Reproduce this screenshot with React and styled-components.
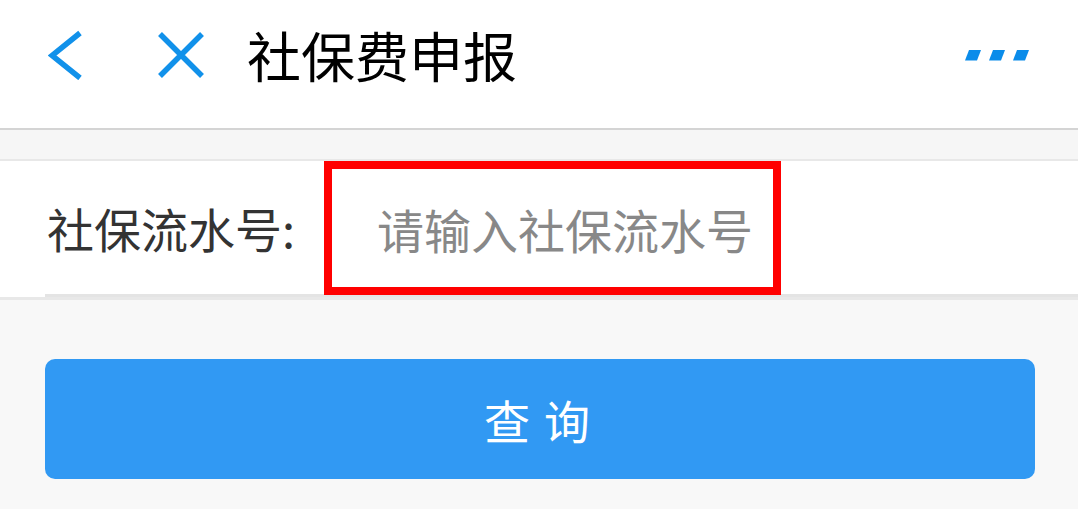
import React from 'react'
import styled, { createGlobalStyle } from 'styled-components'

const Global = createGlobalStyle`
  html, body {
    margin: 0;
    padding: 0;
    background: #f8f8f8;
    font-family: "Noto Sans CJK SC", "Noto Sans", sans-serif;
  }
  * { box-sizing: border-box; }
`

const S = {
  Page: styled.div`
    width: 1078px;
    min-height: 509px;
    background: #f8f8f8;
  `,
  Header: styled.header`
    height: 130px;
    display: flex;
    align-items: center;
    padding: 0 49px 18px 48px;
    background: #fff;
    border-bottom: 2px solid #d4d4d4;
  `,
  IconButton: styled.button`
    display: flex;
    padding: 0;
    border: 0;
    background: none;
    margin-left: ${p => p.$offset || 0}px;
    cursor: pointer;
  `,
  Title: styled.h1`
    margin: 0 0 0 41px;
    font-size: 54px;
    font-weight: 400;
    line-height: 1;
    color: #000;
  `,
  More: styled.button`
    margin-left: auto;
    display: flex;
    padding: 0;
    border: 0;
    background: none;
  `,
  Gap: styled.div`
    height: 31px;
    background: #f6f6f6;
    border-bottom: 2px solid #e8e8e8;
  `,
  Section: styled.section`
    background: #fff;
    padding-left: 45px;
    border-bottom: 3px solid #e8e8e8;
  `,
  Row: styled.div`
    display: flex;
    align-items: center;
    height: 136px;
    border-bottom: 3px solid #e4e4e4;
  `,
  Label: styled.label`
    width: 279px;
    padding-left: 2px;
    font-size: 47px;
    color: #333;
    white-space: nowrap;
  `,
  Input: styled.input`
    width: 457px;
    height: 134px;
    margin-top: 1px;
    border: 8px solid #ff0000;
    padding: 0 0 0 45px;
    font-family: inherit;
    font-size: 47px;
    color: #333;
    outline: none;
    background: #fff;
    &::placeholder { color: #888; }
  `,
  Body: styled.div`
    padding: 59px 43px 30px 45px;
  `,
  Submit: styled.button`
    width: 100%;
    height: 120px;
    border: 0;
    border-radius: 10px;
    background: #3199f3;
    color: #fff;
    font-family: inherit;
    font-size: 46px;
    letter-spacing: 14px;
    padding-left: 14px;
    cursor: pointer;
  `,
}

const Back = () => (
  <svg width="36" height="50" viewBox="0 0 36 50" fill="none">
    <polyline points="32,3 4,25.5 32,48" stroke="#1191ea" strokeWidth="5.5" />
  </svg>
)

const Close = () => (
  <svg width="50" height="50" viewBox="0 0 50 50" fill="none">
    <path d="M4 4 L46 46 M46 4 L4 46" stroke="#1191ea" strokeWidth="5.5" />
  </svg>
)

const Dots = () => (
  <svg width="64" height="11" viewBox="0 0 64 11">
    {[0, 24, 48].map(x => (
      <polygon key={x} points={`${x + 4},0 ${x + 16},0 ${x + 12},10.5 ${x},10.5`} fill="#0a8cea" />
    ))}
  </svg>
)

export default function App() {
  return (
    <S.Page>
      <Global />
      <S.Header>
        <S.IconButton aria-label="返回"><Back /></S.IconButton>
        <S.IconButton aria-label="关闭" $offset={72}><Close /></S.IconButton>
        <S.Title>社保费申报</S.Title>
        <S.More aria-label="更多"><Dots /></S.More>
      </S.Header>
      <S.Gap />
      <S.Section>
        <S.Row>
          <S.Label htmlFor="serial">社保流水号:</S.Label>
          <S.Input id="serial" placeholder="请输入社保流水号" />
        </S.Row>
      </S.Section>
      <S.Body>
        <S.Submit>查询</S.Submit>
      </S.Body>
    </S.Page>
  )
}
